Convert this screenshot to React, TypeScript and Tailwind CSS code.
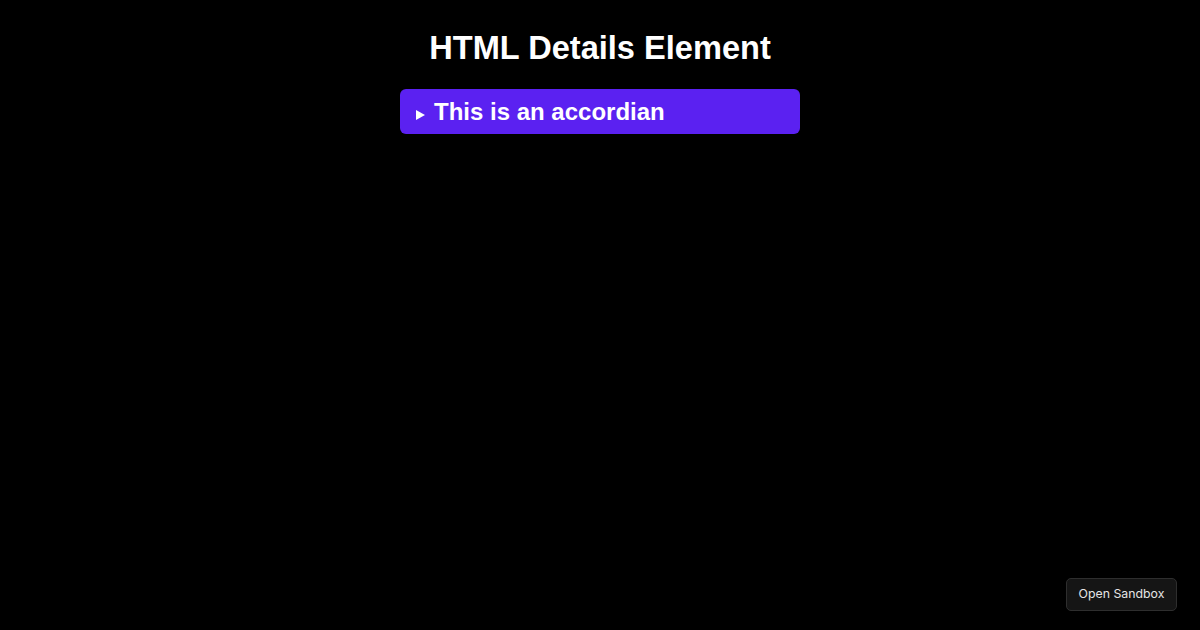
export default function App() {
  return (
    <div className="relative min-h-[630px] w-full bg-black font-['Liberation_Sans',Arial,sans-serif] text-white">
      <div className="flex flex-col items-center pt-[29px]">
        <h1 className="text-[32.6px] font-bold leading-[37px]">HTML Details Element</h1>

        {/* Accordion */}
        <div className="mt-[23px] w-[400px] rounded-md bg-[#5b21f1]">
          <div className="flex items-center gap-[9px] px-4 pt-[9px] pb-2">
            <svg width="9" height="10" viewBox="0 0 9 10" className="mt-[5px]">
              <path d="M0 0 L9 5 L0 10 Z" fill="white" />
            </svg>
            <span className="text-[24px] font-bold leading-[28px]">This is an accordian</span>
          </div>
        </div>
      </div>

      <button className="absolute bottom-[19px] right-[23px] h-[33px] w-[111px] rounded-[5px] border border-[#2e2e2e] bg-[#151515] font-['Inter',sans-serif] text-[12.3px] text-[#e5e5e5]">
        Open Sandbox
      </button>
    </div>
  );
}
